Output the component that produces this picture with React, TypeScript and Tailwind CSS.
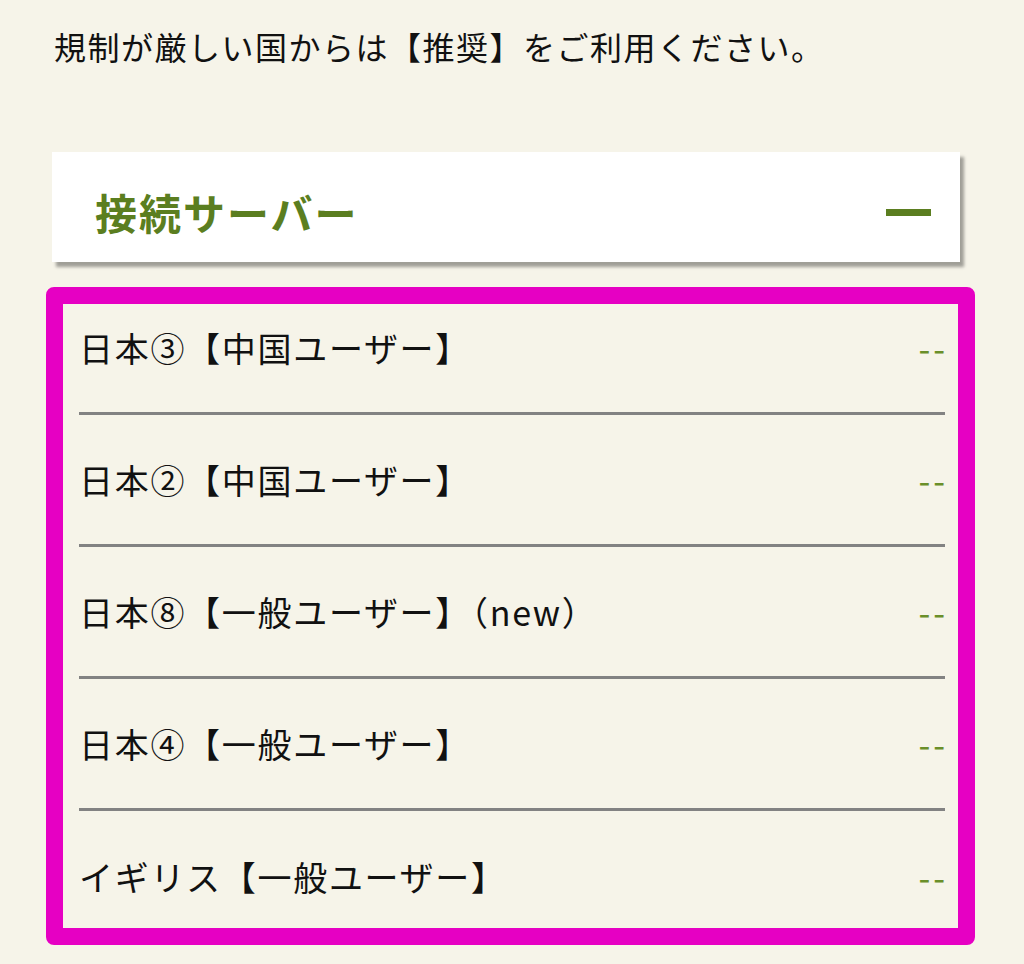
const servers = [
  "日本③【中国ユーザー】",
  "日本②【中国ユーザー】",
  "日本⑧【一般ユーザー】（new）",
  "日本④【一般ユーザー】",
  "イギリス【一般ユーザー】",
];

export default function App() {
  return (
    <div className="relative min-h-[964px] w-[1024px] bg-[#f6f4e9] font-['Noto_Sans_CJK_JP','Noto_Sans',sans-serif] text-[#111]">
      {/* Notice */}
      <p className="pl-[54px] pt-[22px] text-[32px] leading-[48px] tracking-[1.5px]">
        規制が厳しい国からは【推奨】をご利用ください。
      </p>

      {/* Accordion header */}
      <div className="ml-[52px] mt-[82px] flex h-[110px] w-[908px] items-center justify-between bg-white pl-[43px] pr-[29px] pt-[10px] shadow-[4px_5px_3px_rgba(0,0,0,0.35)]">
        <h2 className="text-[42px] font-bold leading-none tracking-[2px] text-[#5b7e20]">接続サーバー</h2>
        <span className="block h-[7px] w-[45px] bg-[#5b7e20]" />
      </div>

      {/* Server list */}
      <ul className="ml-[79px] mt-[21px] w-[866px]">
        {servers.map((name, i) => (
          <li
            key={name}
            className={`flex h-[132px] items-center justify-between ${
              i < servers.length - 1 ? "border-b-[3px] border-[#828282]" : ""
            }`}
          >
            <span className="text-[34px] leading-none tracking-[1.7px]">{name}</span>
            <span className="-mr-[3px] text-[34px] leading-none tracking-[3px] text-[#6a8f2a]">--</span>
          </li>
        ))}
      </ul>

      {/* highlight frame */}
      <div className="pointer-events-none absolute left-[46px] top-[287px] h-[658px] w-[929px] rounded-[8px] border-[17px] border-[#e600c3]" />
    </div>
  );
}
